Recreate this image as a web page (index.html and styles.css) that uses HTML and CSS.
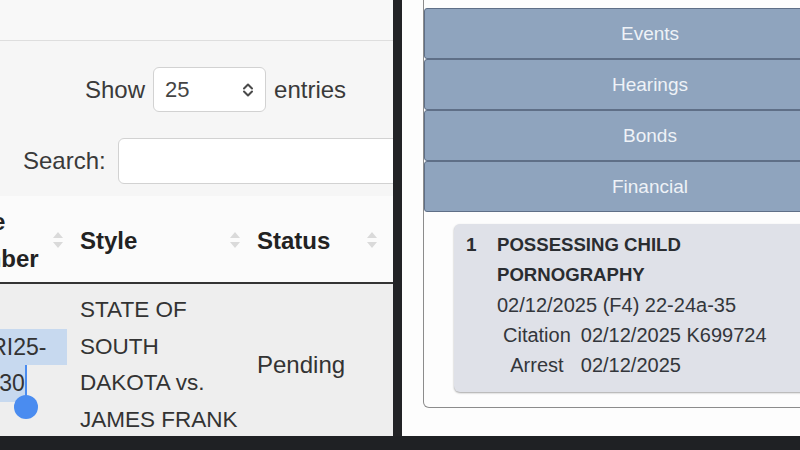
FILE: index.html
```html
<!DOCTYPE html>
<html>
<head>
<meta charset="utf-8">
<link rel="stylesheet" href="styles.css">
</head>
<body>
<div class="screen">
  <div class="panes">
    <section class="left">
      <div class="topbar"></div>
      <div class="length">
        <span>Show</span>
        <div class="select">
          <span>25</span>
          <svg class="chev" width="12" height="16" viewBox="0 0 12 16"><path d="M2 6.5 L6 2.5 L10 6.5 M2 9.5 L6 13.5 L10 9.5" fill="none" stroke="#4a4a4a" stroke-width="2" stroke-linecap="round" stroke-linejoin="round"/></svg>
        </div>
        <span>entries</span>
      </div>
      <div class="search">
        <label>Search:</label>
        <div class="input"></div>
      </div>
      <table class="grid">
        <colgroup><col class="c1"><col class="c2"><col class="c3"><col class="c4"></colgroup>
        <thead>
          <tr>
            <th><div class="th"><span>Case Number</span><svg class="sort" width="10" height="18" viewBox="0 0 10 18"><path d="M0 7 L5 1 L10 7 Z M0 11 L5 17 L10 11 Z" fill="#dadada"/></svg></div></th>
            <th><div class="th"><span>Style</span><svg class="sort" width="10" height="18" viewBox="0 0 10 18"><path d="M0 7 L5 1 L10 7 Z M0 11 L5 17 L10 11 Z" fill="#dadada"/></svg></div></th>
            <th><div class="th"><span>Status</span><svg class="sort" width="10" height="18" viewBox="0 0 10 18"><path d="M0 7 L5 1 L10 7 Z M0 11 L5 17 L10 11 Z" fill="#dadada"/></svg></div></th>
            <th></th>
          </tr>
        </thead>
        <tbody>
          <tr>
            <td class="casenum"><span class="sel-line">49CRI25-</span><span class="sel-end">000130<span class="caret"></span></span></td>
            <td class="style">STATE OF SOUTH DAKOTA vs. JAMES FRANK</td>
            <td class="status">Pending</td>
            <td></td>
          </tr>
        </tbody>
      </table>
    </section>
    <div class="divider"></div>
    <section class="right">
      <div class="box">
        <div class="btn">Events</div>
        <div class="btn">Hearings</div>
        <div class="btn">Bonds</div>
        <div class="btn">Financial</div>
        <div class="card">
          <div class="num">1</div>
          <div class="body">
            <div class="title">POSSESSING CHILD<br>PORNOGRAPHY</div>
            <div class="date">02/12/2025 (F4) 22-24a-35</div>
            <table class="meta">
              <tr><td class="lbl">Citation</td><td>02/12/2025 K699724</td></tr>
              <tr><td class="lbl">Arrest</td><td>02/12/2025</td></tr>
            </table>
          </div>
        </div>
      </div>
    </section>
  </div>
  <div class="bottombar"></div>
</div>
</body>
</html>
```
FILE: styles.css
```css
* { box-sizing: border-box; }
html, body { margin: 0; padding: 0; }
body {
  width: 800px;
  height: 450px;
  overflow: hidden;
  font-family: "Liberation Sans", Arial, sans-serif;
  background: #1f2124;
}
.screen { display: flex; flex-direction: column; width: 800px; height: 450px; }
.panes { display: flex; height: 436px; }
.bottombar { height: 14px; background: #1f2124; }

/* left pane */
.left {
  width: 393px;
  flex: none;
  overflow: hidden;
  background: #f6f6f6;
  color: #333;
}
.topbar {
  height: 41px;
  background: #f8f8f8;
  border-bottom: 1px solid #dedede;
}
.length {
  display: flex;
  align-items: center;
  gap: 8px;
  height: 45px;
  margin-top: 26px;
  padding-left: 85px;
  font-size: 24px;
  color: #3a3a3a;
}
.select {
  width: 113px;
  height: 45px;
  flex: none;
  background: #fff;
  border: 1px solid #d2d2d2;
  border-radius: 6px;
  display: flex;
  align-items: center;
  justify-content: space-between;
  padding: 0 11px 0 11px;
  font-size: 22px;
  color: #444;
}
.search {
  display: flex;
  align-items: center;
  gap: 12px;
  height: 46px;
  margin-top: 26px;
  padding-left: 23px;
  font-size: 24px;
  color: #3a3a3a;
}
.input {
  width: 300px;
  height: 46px;
  flex: none;
  background: #fff;
  border: 1px solid #d2d2d2;
  border-radius: 6px;
}
.grid {
  margin-top: 12px;
  margin-left: -62px;
  border-collapse: collapse;
  table-layout: fixed;
  width: 596px;
}
.c1 { width: 132px; }
.c2 { width: 177px; }
.c3 { width: 137px; }
.c4 { width: 150px; }
.grid th {
  background: #fbfbfb;
  border-bottom: 2px solid #333;
  padding: 7px 7px 5px 10px;
  font-size: 24px;
  line-height: 37px;
  font-weight: bold;
  text-align: left;
  color: #222;
  vertical-align: middle;
}
.th { display: flex; align-items: center; justify-content: space-between; gap: 4px; }
.sort { flex: none; }
.grid td {
  background: #eeeeee;
  padding: 8px 10px 0 10px;
  font-size: 23px;
  line-height: 36.5px;
  vertical-align: middle;
  color: #333;
}
.grid td.style { padding-right: 2px; font-size: 22.5px; }
.grid td.status { font-size: 24px; }
.sel-line {
  display: block;
  background: #c7d9ef;
  margin-right: -7px;
}
.sel-end {
  display: inline-block;
  position: relative;
  background: #c7d9ef;
}
.caret {
  position: absolute;
  right: -2px;
  top: 0;
  width: 2px;
  height: 38px;
  background: #4a8cf0;
}
.caret::after {
  content: "";
  position: absolute;
  left: -11px;
  top: 30px;
  width: 24px;
  height: 24px;
  border-radius: 50%;
  background: #4a8cf0;
}

.divider { width: 9px; flex: none; background: #222326; }

/* right pane */
.right {
  flex: 1;
  overflow: hidden;
  background: #fdfdfd;
  padding-left: 21px;
}
.box {
  width: 454px;
  border: 1px solid #8c8c8c;
  border-top: none;
  border-radius: 0 0 6px 6px;
  padding: 8px 0 15px 0;
  background: #fdfdfd;
}
.btn {
  height: 51px;
  background: #8fa4be;
  border: 1px solid #5f6f87;
  border-radius: 3px;
  color: #eef2f7;
  font-size: 19px;
  display: flex;
  align-items: center;
  justify-content: center;
  padding-top: 1px;
}
.card {
  margin: 12px 30px 0 30px;
  background: #dfe1e8;
  border-radius: 6px;
  box-shadow: 0 1px 2px rgba(0,0,0,0.35);
  padding: 6px 12px 12px 12px;
  display: flex;
  color: #33363b;
  font-size: 20px;
  line-height: 30px;
}
.num { width: 31px; flex: none; font-weight: bold; font-size: 19px; color: #2a2d31; }
.title { font-weight: bold; font-size: 18.6px; color: #2a2d31; }
.meta { border-collapse: collapse; }
.meta td { padding: 0 0 0 6px; font-size: 20px; line-height: 30px; }
.meta td.lbl { text-align: center; padding: 0 4px 0 6px; }
```
